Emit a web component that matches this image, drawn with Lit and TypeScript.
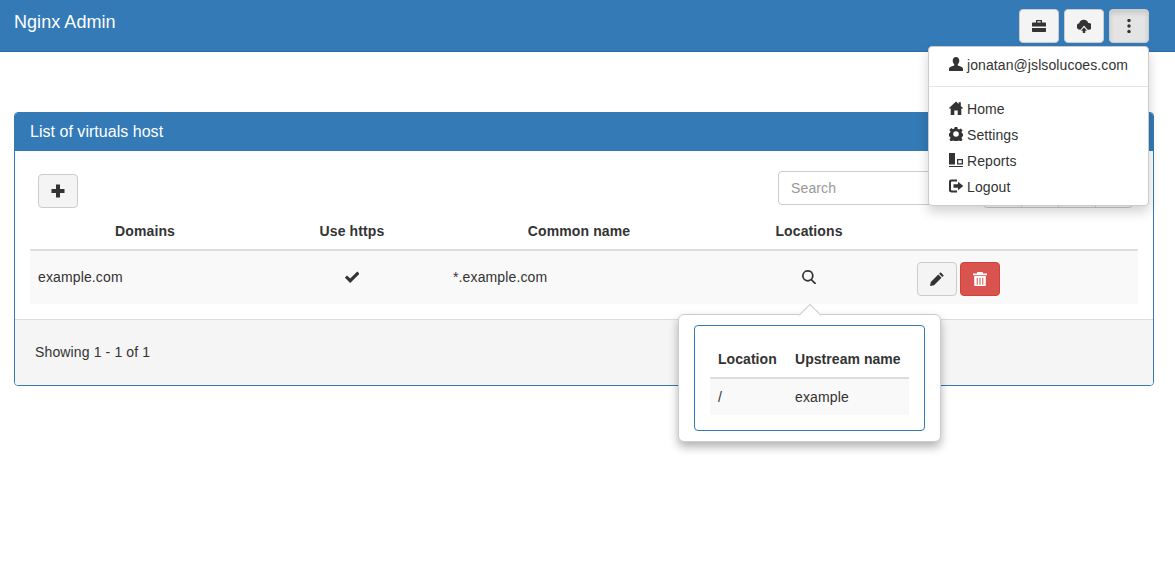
import { LitElement, html, css, svg } from 'lit';
import { customElement } from 'lit/decorators.js';

const icons: Record<string, unknown> = {
  briefcase: svg`<path fill-rule="evenodd" d="M5 2h6v2.500h3.300c.4 0 .7.300.7.700V8.500H1V5.200c0-.4.300-.7.700-.7H5zM6.300 3.200v1.300h3.400V3.200zM1 10h14v3.300c0 .4-.3.700-.7.700H1.700c-.4 0-.7-.3-.7-.7z"/>`,
  upload: svg`<path d="M4 11.800a3.300 3.300 0 0 1-.8-6.500A4.700 4.700 0 0 1 12.200 5a3.400 3.400 0 0 1 .8 6.800h-1.300L8 7.500 4.500 11.800zM8 9.300l3 3.400H9.200V15H6.800v-2.300H5z"/>`,
  dots: svg`<circle cx="8" cy="2.500" r="1.700"/><circle cx="8" cy="8" r="1.700"/><circle cx="8" cy="13.500" r="1.700"/>`,
  user: svg`<path d="M8 1c2 0 3.300 1.500 3.300 3.800 0 1.500-.7 2.800-1.500 3.500v1.200c1.600.7 5.200 1.400 5.200 3.300V15H1v-2.200c0-1.900 3.600-2.600 5.200-3.300V8.300C5.400 7.600 4.700 6.300 4.700 4.800 4.700 2.500 6 1 8 1z"/>`,
  home: svg`<path d="M8 1.500l2.600 2.400V2.200h2.200v3.800L15.500 8.500h-2.200V15H9.700v-4.500H6.300V15H2.700V8.500H.5z"/>`,
  cog: svg`<path fill-rule="evenodd" d="M6.700 1h2.600l.4 2 1.300.6 1.800-1.100 1.800 1.800-1.100 1.800.6 1.300 2 .4v2.400l-2 .4-.6 1.300 1.100 1.800-1.800 1.800-1.800-1.100-1.300.6-.4 2H6.700l-.4-2-1.300-.6-1.800 1.100-1.800-1.800 1.100-1.800-.6-1.300-2-.4V7.400l2-.4.6-1.300-1.100-1.800 1.800-1.800 1.800 1.100 1.300-.6zM8 5.200a2.800 2.800 0 1 0 0 5.600 2.800 2.800 0 0 0 0-5.600z"/>`,
  reports: svg`<path fill-rule="evenodd" d="M1 1h6v11.500H1zM9 7h6v5.500H9zM10.300 8.300v3h3.400v-3zM1 14h14v1.200H1z"/>`,
  logout: svg`<path d="M3.500 1.500H9v2H3.800a.8.800 0 0 0-.8.800v7.400c0 .4.400.8.800.8H9v2H3.500A2.700 2.700 0 0 1 .8 11.800V4.200A2.700 2.700 0 0 1 3.500 1.500zM10 3.800 15.200 8 10 12.200V9.700H5.500V6.300H10z"/>`,
  plus: svg`<path d="M6 1.500h4V6h4.500v4H10v4.500H6V10H1.500V6H6z"/>`,
  check: svg`<path d="M13.300 2.500 15.500 4.700 6.200 14 .8 8.600 3 6.400l3.200 3.200z"/>`,
  search: svg`<path fill-rule="evenodd" d="M6.800 1a5.800 5.800 0 0 1 4.500 9.400l4 3.900-1.300 1.300-3.900-4A5.800 5.800 0 1 1 6.800 1zm0 1.700a4.100 4.100 0 1 0 0 8.200 4.100 4.100 0 0 0 0-8.200z"/>`,
  pencil: svg`<path d="M11.600 1.200 14.800 4.400 13.300 5.900 10.100 2.700zM9.300 3.500 12.500 6.700 5 14.200 1 15l.8-4z"/>`,
  trash: svg`<path fill-rule="evenodd" d="M5.500 1h5l.7 1.500H15v1.700H1V2.500h3.800zM2.200 5h11.600v9a1.500 1.500 0 0 1-1.500 1.500H3.700A1.500 1.500 0 0 1 2.200 14zM4.700 6.800v7h1v-7zM7.500 6.800v7h1v-7zM10.300 6.800v7h1v-7z"/>`,
};

function icon(name: string) {
  return html`<svg class="icon" viewBox="1 1 14 14" fill="currentColor">${icons[name]}</svg>`;
}

@customElement('app-root')
export class AppRoot extends LitElement {
  static styles = css`
    :host {
      display: block;
      position: relative;
      height: 573px;
      background: #fff;
      color: #333;
      font-family: "Liberation Sans", Arial, sans-serif;
      font-size: 14px;
      line-height: 20px;
      letter-spacing: 0.13px;
      overflow: hidden;
    }

    .icon {
      width: 14px;
      height: 14px;
      display: inline-block;
      flex: none;
    }

    .navbar {
      height: 52px;
      box-sizing: border-box;
      background: #337ab7;
      border-bottom: 1px solid #2e6da4;
      display: flex;
      justify-content: space-between;
      align-items: flex-start;
      padding: 9px 26px 0 14px;
    }

    .brand {
      color: #fff;
      font-size: 18px;
      line-height: 26px;
      letter-spacing: 0.05px;
    }

    .nav-buttons {
      display: flex;
      gap: 5px;
    }

    .btn {
      width: 40px;
      height: 34px;
      box-sizing: border-box;
      border: 1px solid #ccc;
      border-radius: 4px;
      background: #f4f4f4;
      color: #333;
      padding: 0;
      display: flex;
      align-items: center;
      justify-content: center;
    }

    .btn.active {
      background: #e4e4e4;
      box-shadow: inset 0 3px 5px rgba(0, 0, 0, 0.125);
    }

    .btn.danger {
      background: #d9534f;
      border-color: #d43f3a;
      color: #fff;
    }

    .panel {
      margin: 60px 21px 0 14px;
      border: 1px solid #337ab7;
      border-radius: 4px;
      overflow: hidden;
    }

    .panel-heading {
      height: 38px;
      background: #337ab7;
      color: #fff;
      font-size: 16px;
      line-height: 38px;
      padding: 0 15px;
      letter-spacing: 0.03px;
    }

    .panel-body {
      padding: 20px 15px 0;
      height: 168px;
      box-sizing: border-box;
    }

    .toolbar {
      display: flex;
      align-items: flex-start;
      padding: 0 5px 0 8px;
      height: 37px;
    }

    .toolbar > .btn {
      margin: 3px auto 0 0;
    }

    .search {
      width: 180px;
      height: 34px;
      box-sizing: border-box;
      border: 1px solid #ccc;
      border-radius: 4px;
      padding: 6px 12px;
      color: #999;
      margin-right: 25px;
    }

    .pager {
      display: grid;
      grid-template-columns: repeat(4, 37px);
      height: 34px;
      margin-top: 3px;
      box-sizing: border-box;
      border: 1px solid #ccc;
      border-radius: 4px;
    }

    .pager div + div {
      border-left: 1px solid #ccc;
    }

    .row {
      display: grid;
      grid-template-columns: 230px 184px 270px 190px 1fr;
    }

    .row.head {
      font-weight: 700;
      height: 38px;
      align-items: center;
      text-align: center;
      margin-top: 5px;
      border-bottom: 2px solid #ddd;
      box-sizing: border-box;
      letter-spacing: 0.12px;
    }

    .row.body {
      height: 53px;
      background: #f9f9f9;
      align-items: center;
    }

    .row.body > div {
      padding-bottom: 1px;
    }

    .row.body > div:first-child {
      padding-left: 8px;
    }

    .center {
      display: flex;
      justify-content: center;
    }

    .row.body > .cell-name {
      padding-left: 9px;
    }

    .row.body > .actions {
      display: flex;
      gap: 3px;
      padding: 2px 0 0 13px;
    }

    .panel-footer {
      height: 66px;
      box-sizing: border-box;
      background: #f5f5f5;
      border-top: 1px solid #ddd;
      padding: 22px 20px;
    }

    .menu {
      position: absolute;
      left: 928px;
      top: 46px;
      width: 221px;
      height: 160px;
      box-sizing: border-box;
      background: #fff;
      border: 1px solid #ccc;
      border-radius: 4px;
      box-shadow: 0 6px 12px rgba(0, 0, 0, 0.175);
      padding-top: 5px;
      letter-spacing: 0.09px;
    }

    .menu-item {
      height: 26px;
      display: flex;
      align-items: center;
      gap: 4px;
      padding-left: 20px;
      white-space: nowrap;
    }

    .menu-item .icon {
      margin-top: -2px;
    }

    .menu hr {
      border: none;
      border-top: 1px solid #e5e5e5;
      margin: 8px 0 9px;
    }

    .popover {
      position: absolute;
      left: 678px;
      top: 314px;
      width: 263px;
      height: 128px;
      box-sizing: border-box;
      background: #fff;
      border: 1px solid #ccc;
      border-radius: 6px;
      box-shadow: 0 5px 10px rgba(0, 0, 0, 0.3);
      padding: 10px 15px;
    }

    .arrow {
      position: absolute;
      left: 123px;
      top: -8px;
      width: 15px;
      height: 15px;
      background: #fff;
      border-left: 1px solid #ccc;
      border-top: 1px solid #ccc;
      transform: rotate(45deg);
    }

    .inner {
      position: relative;
      height: 106px;
      box-sizing: border-box;
      border: 1px solid #337ab7;
      border-radius: 4px;
      padding: 15px;
    }

    .inner-row {
      display: grid;
      grid-template-columns: 77px 1fr;
    }

    .inner-row.head {
      font-weight: 700;
      height: 38px;
      align-items: center;
      padding-left: 8px;
      border-bottom: 2px solid #ddd;
      box-sizing: border-box;
      letter-spacing: 0.05px;
    }

    .inner-row.body {
      height: 36px;
      align-items: center;
      background: #f9f9f9;
      padding-left: 8px;
    }
  `;

  render() {
    return html`
      <div class="navbar">
        <div class="brand">Nginx Admin</div>
        <div class="nav-buttons">
          <button class="btn">${icon('briefcase')}</button>
          <button class="btn">${icon('upload')}</button>
          <button class="btn active">${icon('dots')}</button>
        </div>
      </div>

      <div class="panel">
        <div class="panel-heading">List of virtuals host</div>
        <div class="panel-body">
          <div class="toolbar">
            <button class="btn">${icon('plus')}</button>
            <div class="search">Search</div>
            <div class="pager"><div></div><div></div><div></div><div></div></div>
          </div>
          <div class="row head">
            <div>Domains</div>
            <div>Use https</div>
            <div>Common name</div>
            <div>Locations</div>
            <div></div>
          </div>
          <div class="row body">
            <div>example.com</div>
            <div class="center">${icon('check')}</div>
            <div class="cell-name">*.example.com</div>
            <div class="center">${icon('search')}</div>
            <div class="actions">
              <button class="btn">${icon('pencil')}</button>
              <button class="btn danger">${icon('trash')}</button>
            </div>
          </div>
        </div>
        <div class="panel-footer">Showing 1 - 1 of 1</div>
      </div>

      <div class="menu">
        <div class="menu-item">${icon('user')}jonatan@jslsolucoes.com</div>
        <hr />
        <div class="menu-item">${icon('home')}Home</div>
        <div class="menu-item">${icon('cog')}Settings</div>
        <div class="menu-item">${icon('reports')}Reports</div>
        <div class="menu-item">${icon('logout')}Logout</div>
      </div>

      <div class="popover">
        <div class="arrow"></div>
        <div class="inner">
          <div class="inner-row head"><div>Location</div><div>Upstream name</div></div>
          <div class="inner-row body"><div>/</div><div>example</div></div>
        </div>
      </div>
    `;
  }
}
